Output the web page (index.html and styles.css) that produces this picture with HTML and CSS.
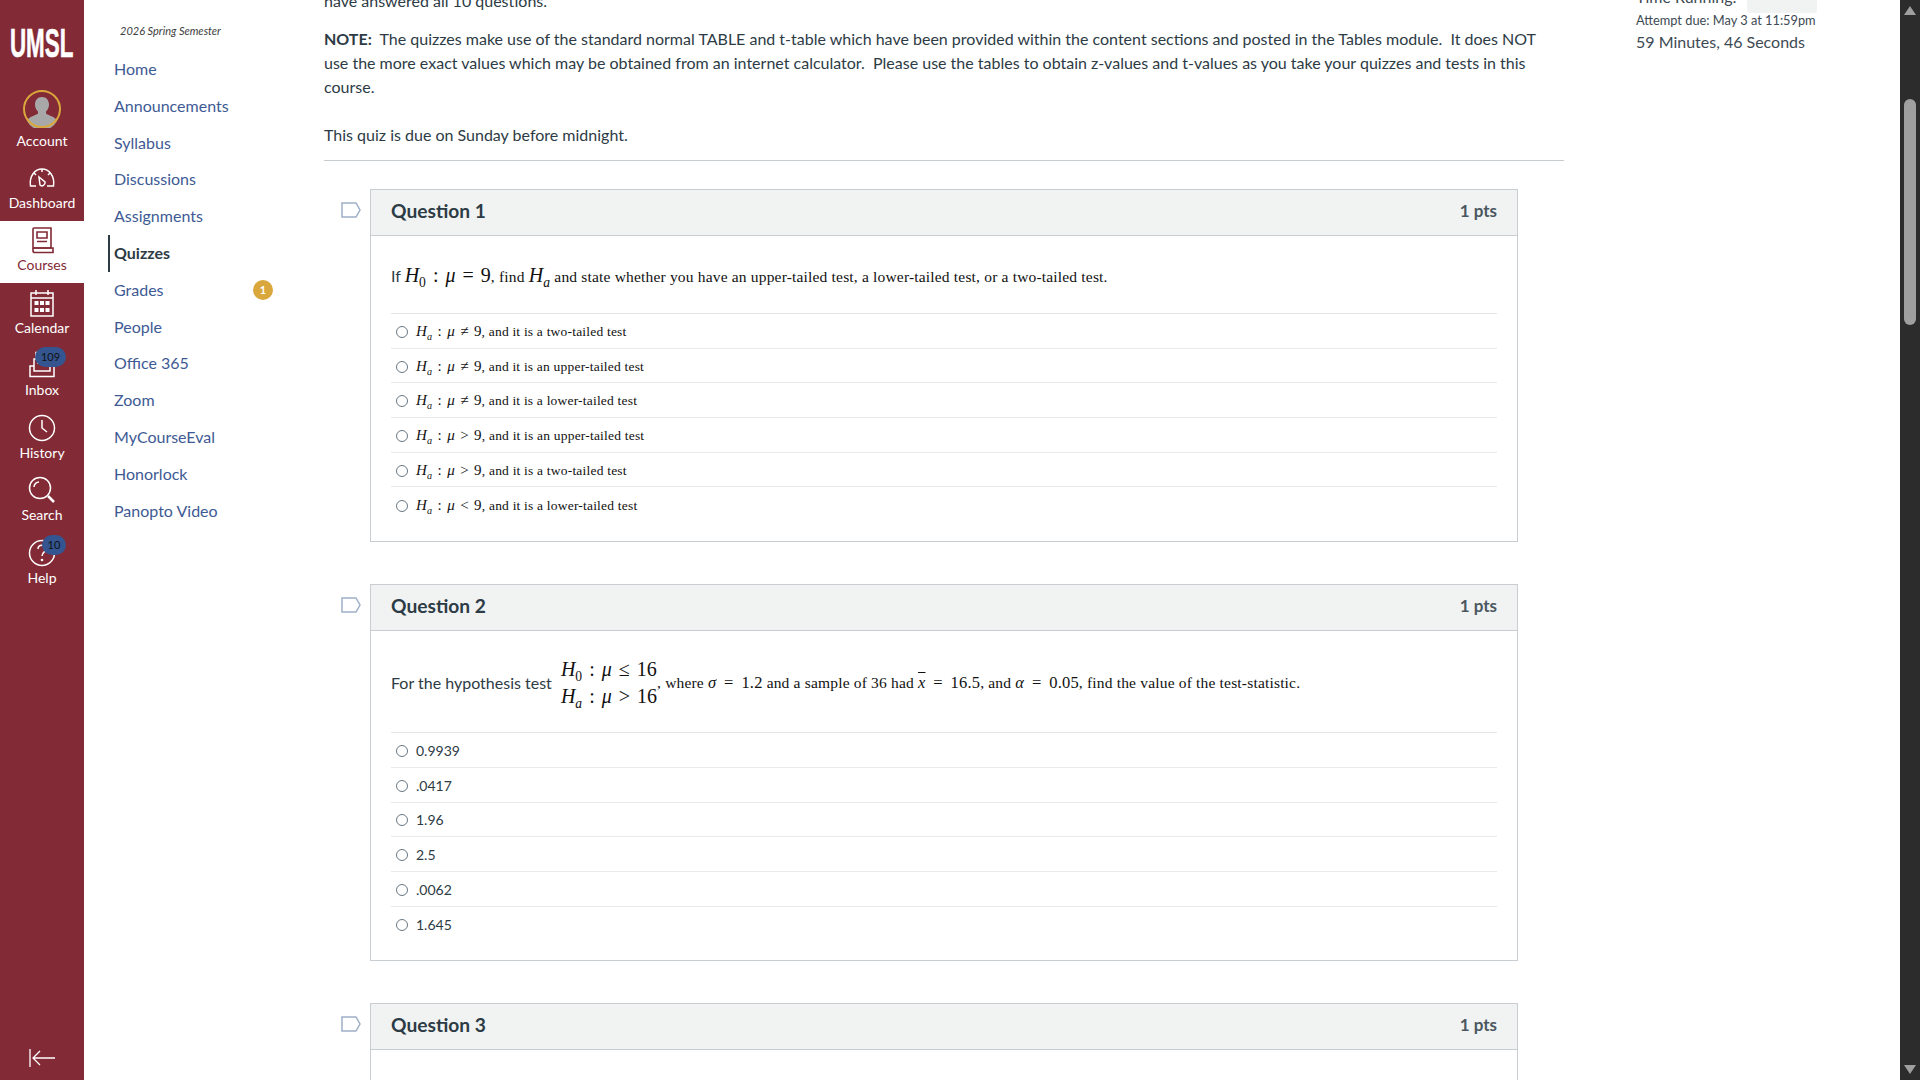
FILE: index.html
```html
<!DOCTYPE html>
<html lang="en">
<head>
<meta charset="utf-8">
<title>Quiz</title>
<link rel="stylesheet" href="styles.css">
</head>
<body>
<nav class="gnav">
  <div class="logo"><span>UMSL</span></div>
  <a class="gitem acct"><span class="avatar"><svg viewBox="0 0 38 38" width="38" height="38"><path d="M19 7c4.500 0 7 3.500 7 7.500 0 3-1.300 5.500-3 7v2c2 2 9 2.500 11 7.500a17 17 0 0 1-30 0c2-5 9-5.500 11-7.500v-2c-1.700-1.500-3-4-3-7C12 10.500 14.500 7 19 7z" fill="#a8a8a8"/><circle cx="19" cy="19" r="18" fill="none" stroke="#d9a73c" stroke-width="2"/></svg></span><span>Account</span></a>
  <a class="gitem"><svg class="gicon" viewBox="0 0 28 24"><g fill="none" stroke="currentColor" stroke-width="1.500"><path d="M8 20H2.500C1 10 7 3 14 3s13 7 11.500 17H19"/><path d="M11 11l6 5c.5 3-3 5-5 3z"/><path d="M14 3v3M6 7l2 2M22 7l-2 2"/></g></svg><span>Dashboard</span></a>
  <a class="gitem active"><svg class="gicon" viewBox="0 0 28 28"><g fill="none" stroke="currentColor" stroke-width="1.600"><path d="M5 22V3a1 1 0 0 1 1-1h17v20z"/><path d="M5 22v3c0 1 1 1.500 2 1.500h18V22H6"/><path d="M9 6h10v6H9zM9 15.500h10"/></g></svg><span>Courses</span></a>
  <a class="gitem"><svg class="gicon" viewBox="0 0 28 28"><g fill="none" stroke="currentColor" stroke-width="1.500"><path d="M3 4h22v23H3zM3 9h22M8 1v5M20 1v5"/></g><g fill="currentColor"><path d="M6.500 12h4v4h-4zM12 12h4v4h-4zM17.500 12h4v4h-4zM6.500 19h4v4h-4zM12 19h4v4h-4zM17.500 19h4v4h-4z"/></g></svg><span>Calendar</span></a>
  <a class="gitem"><span class="iconwrap"><svg class="gicon" viewBox="0 0 28 28"><g fill="none" stroke="currentColor" stroke-width="1.500"><path d="M2 15h4v5h16v-5h4v10.500H2zM6 15V8h16v7M9 12h10M8 8V1.500h12V8"/></g></svg><span class="badge b109">109</span></span><span>Inbox</span></a>
  <a class="gitem"><svg class="gicon" viewBox="0 0 28 28"><g fill="none" stroke="currentColor" stroke-width="1.500"><circle cx="14" cy="14" r="12.500"/><path d="M14 6v8l5 4"/></g></svg><span>History</span></a>
  <a class="gitem"><svg class="gicon" viewBox="0 0 28 28"><g fill="none" stroke="currentColor" stroke-width="1.500"><circle cx="12" cy="12" r="10.500"/><path d="M6 11c0-3 2.500-5 5-5"/><path d="M20 20l6 6" stroke-width="2.500"/></g></svg><span>Search</span></a>
  <a class="gitem"><span class="iconwrap"><svg class="gicon" viewBox="0 0 28 28"><g fill="none" stroke="currentColor" stroke-width="1.500"><circle cx="14" cy="14" r="12.500"/><path d="M10 10c0-5 8-5 8 0 0 3-4 3-4 7"/></g><circle cx="14" cy="21" r="1.300" fill="currentColor"/></svg><span class="badge b10">10</span></span><span>Help</span></a>
  <a class="collapse"><svg viewBox="0 0 28 20" width="28" height="20"><path d="M2 1v18M27 10H5M12 3l-7 7 7 7" fill="none" stroke="currentColor" stroke-width="1.300"/></svg></a>
</nav>

<aside class="side">
  <div class="term">2026 Spring Semester</div>
  <ul class="menu">
    <li><a>Home</a></li>
    <li><a>Announcements</a></li>
    <li><a>Syllabus</a></li>
    <li><a>Discussions</a></li>
    <li><a>Assignments</a></li>
    <li class="current"><a>Quizzes</a></li>
    <li><a>Grades</a><span class="count">1</span></li>
    <li><a>People</a></li>
    <li><a>Office 365</a></li>
    <li><a>Zoom</a></li>
    <li><a>MyCourseEval</a></li>
    <li><a>Honorlock</a></li>
    <li><a>Panopto Video</a></li>
  </ul>
</aside>

<main class="content">
  <div class="intro">
    <p class="cut">have answered all 10 questions.</p>
    <p><b>NOTE:</b>&nbsp; The quizzes make use of the standard normal TABLE and t-table which have been provided within the content sections and posted in the Tables module.&nbsp; It does NOT use the more exact values which may be obtained from an internet calculator.&nbsp; Please use the tables to obtain z-values and t-values as you take your quizzes and tests in this course.</p>
    <p class="due">This quiz is due on Sunday before midnight.</p>
  </div>
  <hr class="rule">

  <section class="qrow">
    <svg class="flag" viewBox="0 0 20 16"><path d="M1 1h14l4 7-4 7H1z" fill="none" stroke="#9db0c8" stroke-width="1.500"/></svg>
    <div class="q">
      <header class="qhead"><h2>Question 1</h2><span class="pts">1 pts</span></header>
      <div class="qbody">
        <div class="stem one">If <span class="m big"><i>H</i><sub>0</sub> : <i>μ</i> = 9</span><span class="tex">, find <span class="m big"><i>H</i><sub><i>a</i></sub></span> and state whether you have an upper-tailed test, a lower-tailed test, or a two-tailed test.</span></div>
        <div class="answers">
          <label class="ans"><span class="radio"></span><span class="tex small"><span class="ms"><i>H</i><sub><i>a</i></sub> : <i>μ</i> ≠ 9</span>, and it is a two-tailed test</span></label>
          <label class="ans"><span class="radio"></span><span class="tex small"><span class="ms"><i>H</i><sub><i>a</i></sub> : <i>μ</i> ≠ 9</span>, and it is an upper-tailed test</span></label>
          <label class="ans"><span class="radio"></span><span class="tex small"><span class="ms"><i>H</i><sub><i>a</i></sub> : <i>μ</i> ≠ 9</span>, and it is a lower-tailed test</span></label>
          <label class="ans"><span class="radio"></span><span class="tex small"><span class="ms"><i>H</i><sub><i>a</i></sub> : <i>μ</i> &gt; 9</span>, and it is an upper-tailed test</span></label>
          <label class="ans"><span class="radio"></span><span class="tex small"><span class="ms"><i>H</i><sub><i>a</i></sub> : <i>μ</i> &gt; 9</span>, and it is a two-tailed test</span></label>
          <label class="ans"><span class="radio"></span><span class="tex small"><span class="ms"><i>H</i><sub><i>a</i></sub> : <i>μ</i> &lt; 9</span>, and it is a lower-tailed test</span></label>
        </div>
      </div>
    </div>
  </section>

  <section class="qrow">
    <svg class="flag" viewBox="0 0 20 16"><path d="M1 1h14l4 7-4 7H1z" fill="none" stroke="#9db0c8" stroke-width="1.500"/></svg>
    <div class="q">
      <header class="qhead"><h2>Question 2</h2><span class="pts">1 pts</span></header>
      <div class="qbody">
        <div class="stem two">For the hypothesis test <span class="stack m big"><span><i>H</i><sub>0</sub> : <i>μ</i> ≤ 16</span><span><i>H</i><sub><i>a</i></sub> : <i>μ</i> &gt; 16</span></span><span class="tex">, where <span class="mi"><i>σ</i> = 1.2</span> and a sample of 36 had <span class="mi"><span class="over"><i>x</i></span> = 16.5</span>, and <span class="mi"><i>α</i> = 0.05</span>, find the value of the test-statistic.</span></div>
        <div class="answers">
          <label class="ans"><span class="radio"></span><span>0.9939</span></label>
          <label class="ans"><span class="radio"></span><span>.0417</span></label>
          <label class="ans"><span class="radio"></span><span>1.96</span></label>
          <label class="ans"><span class="radio"></span><span>2.5</span></label>
          <label class="ans"><span class="radio"></span><span>.0062</span></label>
          <label class="ans"><span class="radio"></span><span>1.645</span></label>
        </div>
      </div>
    </div>
  </section>

  <section class="qrow last">
    <svg class="flag" viewBox="0 0 20 16"><path d="M1 1h14l4 7-4 7H1z" fill="none" stroke="#9db0c8" stroke-width="1.500"/></svg>
    <div class="q">
      <header class="qhead"><h2>Question 3</h2><span class="pts">1 pts</span></header>
      <div class="qbody empty"></div>
    </div>
  </section>
</main>

<aside class="timer">
  <div class="running"><span>Time Running:</span><span class="hidebtn"></span></div>
  <div class="attempt">Attempt due: May 3 at 11:59pm</div>
  <div class="clock">59 Minutes, 46 Seconds</div>
</aside>

<div class="scrollbar">
  <span class="arrow up"></span>
  <span class="thumb"></span>
  <span class="arrow down"></span>
</div>
</body>
</html>
```
FILE: styles.css
```css
* { box-sizing: border-box; }
html, body { height: 100%; }
body {
  margin: 0;
  height: 1080px;
  overflow: hidden;
  display: flex;
  font-family: Lato, "Open Sans", sans-serif;
  font-size: 16px;
  color: #2d3b45;
  background: #fff;
}
a { color: inherit; text-decoration: none; }

/* global nav */
.gnav {
  flex: 0 0 84px;
  width: 84px;
  min-width: 0;
  height: 1080px;
  background: #822a35;
  color: #fff;
  display: flex;
  flex-direction: column;
  align-items: stretch;
  position: relative;
}
.logo {
  height: 94px;
  padding-top: 20px;
  display: flex;
  justify-content: center;
  font-family: "Liberation Sans", sans-serif;
  font-weight: 700;
  font-size: 40px;
  line-height: 46px;
  overflow: hidden;
}
.logo span {
  display: block;
  transform: scaleX(.56);
  -webkit-text-stroke: .6px #fff;
}
.gitem {
  height: 62.500px;
  display: flex;
  flex-direction: column;
  align-items: center;
  justify-content: flex-end;
  padding-bottom: 9px;
  font-size: 14px;
  line-height: 18px;
  gap: 2px;
}
.acct { height: 64px; padding-bottom: 8px; }
.active { background: #fff; color: #822a35; }
.gicon { width: 28px; height: 28px; display: block; }
.avatar {
  width: 38px; height: 38px;
  display: block;
  margin-bottom: 2px;
}
.avatar svg { display: block; }
.iconwrap { position: relative; display: block; }
.badge {
  position: absolute;
  background: #34558f;
  color: #111;
  border-radius: 10px;
  font-size: 11px;
  line-height: 20px;
  height: 20px;
  text-align: center;
  top: -4px;
}
.b109 { left: 7px; width: 31px; }
.b10 { left: 14px; width: 24px; }
.collapse { position: absolute; left: 28px; bottom: 12px; width: 28px; height: 20px; }
.collapse svg { display: block; }

/* course nav */
.side { flex: 0 0 240px; padding: 24px 0 0 24px; }
.term { padding-left: 12px; font-size: 11px; font-style: italic; line-height: 14px; color: #3d3d3d; margin-bottom: 13px; }
.menu { list-style: none; margin: 0; padding: 0; width: 165px; }
.menu li {
  height: 36.800px;
  line-height: 36.800px;
  padding-left: 6px;
  display: flex;
  justify-content: space-between;
  align-items: center;
  color: #3e5a94;
}
.menu .current { color: #2d3b45; font-weight: 700; border-left: 2px solid #2d3b45; padding-left: 4px; }
.count {
  width: 20px; height: 20px; border-radius: 50%;
  background: #d9a73c; color: #fff;
  font-size: 11px; font-weight: 700; line-height: 20px; text-align: center;
}

/* main column */
.content { flex: 0 0 1240px; width: 1240px; margin-top: -7px; }
.intro { width: 1230px; }
.intro p { margin: 0 0 24px; line-height: 24px; }
.intro .cut { margin-bottom: 14px; margin-top: -4px; }
.intro .due { margin-bottom: 13px; }
.rule { border: 0; border-top: 1px solid #c7cdd1; margin: 0 0 28px; }
.qrow { display: flex; margin-bottom: 42px; align-items: flex-start; }
.qrow.last { margin-bottom: 0; }
.qrow.last .q { border-bottom: 0; }
.flag { width: 20px; height: 16px; margin: 13px 9px 0 17px; flex: none; }
.q { width: 1148px; border: 1px solid #c7cdd1; }
.qhead {
  height: 46px;
  padding: 0 20px 5px;
  background: #f1f3f3;
  border-bottom: 1px solid #c7cdd1;
  display: flex;
  justify-content: space-between;
  align-items: center;
}
.qhead h2 { margin: 0; font-size: 19.200px; font-weight: 700; }
.pts { font-weight: 700; font-size: 17px; color: #4a5760; }
.qbody { padding: 0 20px 0; }
.qbody.empty { height: 30px; }
.stem { display: flex; align-items: center; padding-top: 2px; border-bottom: 1px solid #e3e6e8; white-space: pre-wrap; }
.stem.one { height: 78px; }
.stem.two { height: 102px; }
.answers { padding-bottom: 19px; }
.ans {
  display: flex;
  align-items: center;
  height: 34.700px;
  padding-top: 1px;
  border-bottom: 1px solid #e8eaec;
  font-size: 14px;
}
.ans:last-child { border-bottom: 0; }
.radio {
  width: 12px; height: 12px; border-radius: 50%;
  border: 1px solid #6a7883;
  margin: 1px 8px 0 5px;
  flex: none;
}
.tex { font-family: "Liberation Serif", serif; font-size: 15.500px; color: #111; letter-spacing: .18px; }
.tex.small { font-size: 13.500px; letter-spacing: .2px; }
.m, .ms, .mi, .tex i { font-family: "Liberation Serif", serif; color: #111; }
.big { font-size: 20px; word-spacing: 2px; }
.ms { font-size: 15px; word-spacing: 1.300px; }
.mi { font-size: 16.500px; word-spacing: 3.500px; }
sub { font-size: 68%; line-height: 0; }
.stack { display: inline-flex; flex-direction: column; line-height: 27px; margin-left: 5px; }
.over { text-decoration: overline; }

/* right column */
.timer { position: absolute; left: 1636px; top: -16px; color: #3d4a53; }
.running { display: flex; align-items: flex-start; height: 26px; gap: 10px; line-height: 26px; }
.hidebtn { display: block; width: 70px; height: 29px; background: #f1f3f3; border-radius: 3px; }
.attempt { font-size: 12.800px; line-height: 20px; }
.clock { font-size: 16px; line-height: 22px; margin-top: 1px; }

/* window scrollbar */
.scrollbar {
  position: absolute; top: 0; right: 0;
  width: 20px; height: 1080px;
  background: #2c2c2c;
}
.thumb { position: absolute; left: 4px; top: 99px; width: 12px; height: 226px; border-radius: 6px; background: #9f9f9f; }
.arrow { position: absolute; left: 4px; width: 0; height: 0; border-left: 6px solid transparent; border-right: 6px solid transparent; }
.arrow.up { top: 6px; border-bottom: 9px solid #9f9f9f; }
.arrow.down { top: 1065px; border-top: 9px solid #9f9f9f; }
```
